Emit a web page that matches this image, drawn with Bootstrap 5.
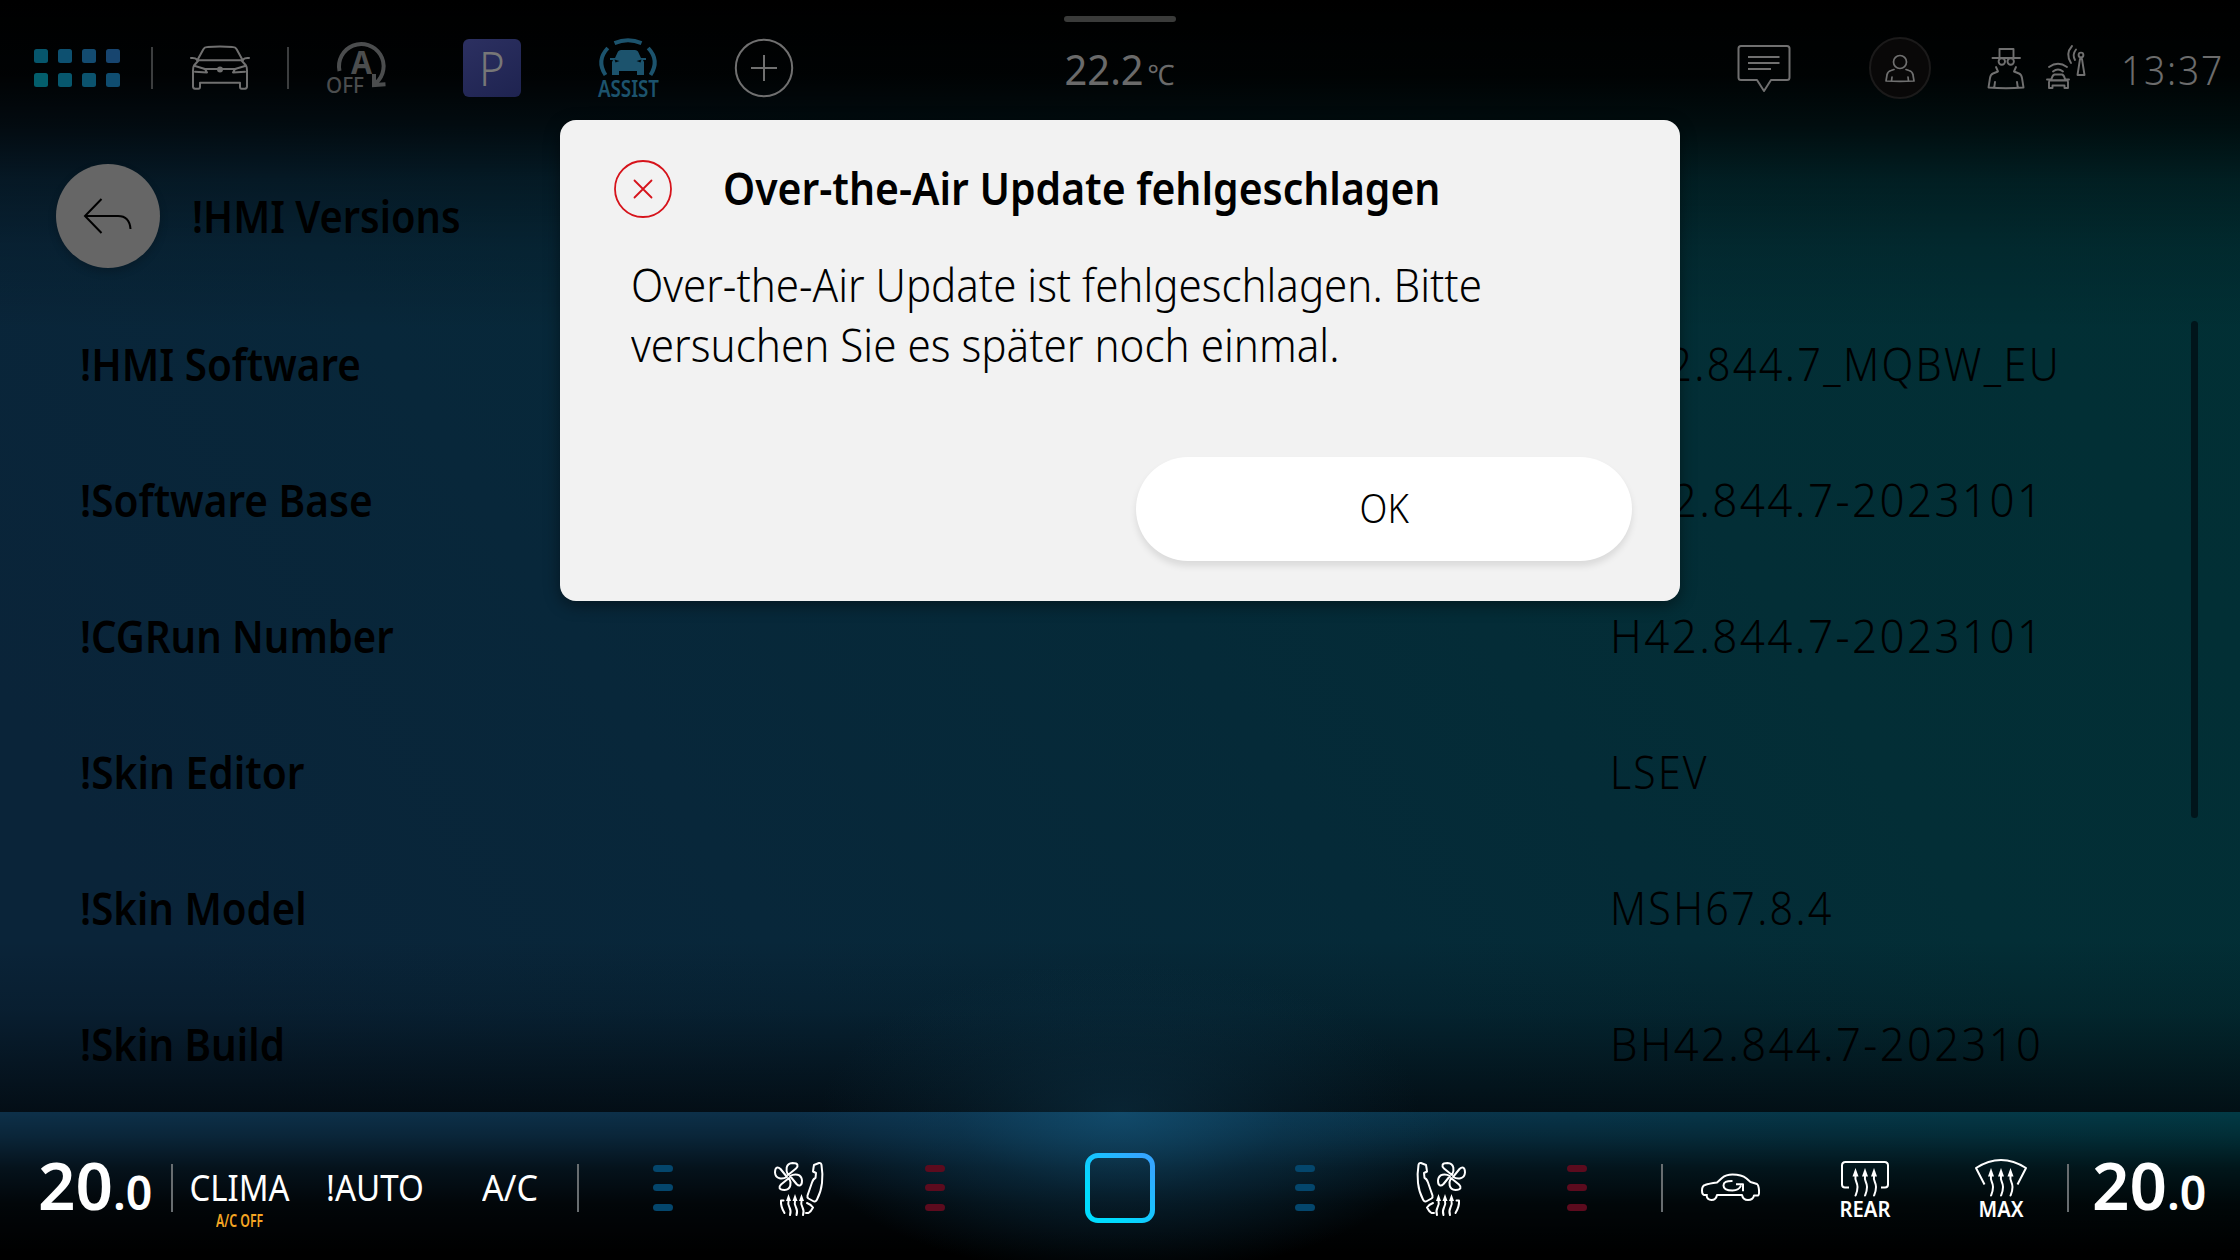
<!DOCTYPE html>
<html lang="de" data-bs-theme="dark">
<head>
<meta charset="utf-8">
<meta name="viewport" content="width=device-width, initial-scale=1">
<title>!HMI Versions</title>
<link href="https://cdn.jsdelivr.net/npm/bootstrap@5.3.0/dist/css/bootstrap.min.css" rel="stylesheet">
<style>
  body { font-family: "Noto Sans", "Open Sans", sans-serif; background: #000; overflow: hidden; }
  .hmi { width: 2240px; height: 1260px; color: #000;
    background:
      radial-gradient(ellipse 300px 150px at 1120px 1112px, rgba(14,56,78,.5), rgba(14,56,78,.2) 55%, transparent),
      linear-gradient(180deg, #000 0, rgba(0,0,0,.94) 75px, rgba(0,0,0,.72) 125px, rgba(0,0,0,.36) 180px, rgba(0,0,0,.14) 245px, transparent 330px),
      linear-gradient(0deg, rgba(2,8,13,.8) 148px, rgba(2,8,13,.52) 195px, rgba(2,8,13,.2) 250px, transparent 320px),
      linear-gradient(57deg, #0a2439 12%, #08273a 32%, #052a38 52%, #032e36 72%, #013034 100%); }
  .fit { display: inline-block; white-space: nowrap; }
  .origin-start { transform-origin: 0 50%; }

  .status-bar { height: 136px; }
  .slot { width: 136px; flex: none; position: relative; }
  .slot-home { width: 152px; padding-left: 2px; }
  .slot-center { width: 576px; }
  .rule-start::before { content: ""; position: absolute; left: -1px; top: 50%; width: 2px; height: 42px; transform: translateY(-50%); background: #3c3e3f; }
  .pull-handle { position: absolute; left: 50%; top: 16px; width: 112px; height: 6px; margin-left: -56px; border-radius: 3px; background: #3a3b3a; }
  .app-grid { display: grid; grid-template-columns: repeat(4, 14px); gap: 10px; }
  .app-grid i { height: 14px; border-radius: 2.5px; }
  .park-tile { width: 58px; height: 58px; border-radius: 6px; background: linear-gradient(150deg, #2c3061, #1e2350); color: #777; font-size: 47px; font-weight: 300; line-height: 58px; }
  .outside { font-size: 41px; color: #6a6a6a; }
  .outside small { font-size: 28px; }
  .clock { font-size: 40px; font-weight: 300; color: #6c6c6c; letter-spacing: 2px; }

  .page-head { height: 160px; padding-left: 56px; }
  .back-btn { width: 104px; height: 104px; background: #666; box-shadow: 0 4px 8px rgba(0,0,0,.2); }
  .page-title, .entry-name { font-size: 45px; font-weight: 560; line-height: 60px; color: #000; }
  .page-title { margin-left: 32px; }
  .entries { --bs-list-group-bg: transparent; --bs-list-group-color: #000; height: 816px; }
  .entry { height: 136px; padding: 0 0 0 80px; --bs-list-group-border-width: 0; }
  .entry-name { width: 1531px; }
  .entry-value { font-size: 45px; font-weight: 300; line-height: 60px; letter-spacing: 2.5px; margin-left: -1px; }
  .scroll-thumb { position: absolute; right: 42px; top: 25px; width: 7px; height: 497px; border-radius: 4px; background: #01151b; }

  .popup { position: absolute; left: 560px; top: 120px; width: 1120px; height: 481px; border-radius: 16px; background: #f2f2f2; color: #000; box-shadow: 0 4px 16px rgba(0,0,0,.45); }
  .popup-head { padding: 39px 0 0 53px; gap: 50px; height: 98px; }
  .popup-title { font-size: 45px; font-weight: 600; line-height: 60px; color: #000; margin-top: -1px; }
  .popup-text { padding: 37px 0 0 71px; font-size: 45px; font-weight: 300; line-height: 60px; }
  .popup-actions { padding: 0 48px 40px 0; }
  .ok-btn { width: 496px; height: 104px; background: #fff; color: #000; font-size: 40px; font-weight: 300; border: 0; padding-bottom: 9px; box-shadow: 0 5px 7px rgba(0,0,0,.1); }

  .climate { height: 148px; margin-top: auto; color: #fff; padding-top: 4px;
    background:
      radial-gradient(ellipse 330px 165px at 1120px 0, rgba(20,84,120,.72), rgba(16,70,102,.36) 50%, transparent),
      linear-gradient(180deg, transparent 0, rgba(0,0,0,.22) 24px, rgba(0,0,0,.62) 56px, rgba(0,0,0,.88) 92px, #000 140px),
      linear-gradient(90deg, #0d3049, #0c3049 40%, #08354a 70%, #023a45); }
  .climate .rule-start::before { height: 48px; background: #686d70; }
  .w-temp { width: 172px; }
  .clima-label { font-size: 36.5px; font-weight: 400; line-height: 50px; margin-top: -2px; margin-right: 2px; }
  .clima-note { position: absolute; left: 0; right: 0; top: 95px; font-size: 17px; font-weight: 600; line-height: 20px; color: #f5a623; }
  .temp { line-height: 80px; padding-top: 13px; }
  .temp b { font-size: 65px; font-weight: 600; }
  .temp span span { font-size: 46px; font-weight: 600; }
  .pills { display: grid; gap: 12.5px; margin-top: -1px; }
  .pills i { width: 20px; height: 7px; border-radius: 3.5px; }
  .cool i { background: #04466c; }
  .heat i { background: #5c0b1e; }
  svg { display: block; overflow: visible; }
  .ln { fill: none; stroke: currentColor; stroke-width: 2; stroke-linecap: round; stroke-linejoin: round; }
  svg text { font-family: "Noto Sans", sans-serif; stroke: none; fill: currentColor; }
  .dim { color: #707070; }
</style>
</head>
<body>
<svg width="0" height="0" class="position-absolute">
  <defs>
    <path id="blade" d="M-.5-1.5C-3-6-3-13 4-13.5C10-13.5 10-10.500 7.500-8Z"/>
    <g id="heatwave"><path class="ln" d="M0 6c-1 5 2 6 2 11c0 4-1 6-2 8.500"/><path d="M0-2L3 6.500H-3Z" fill="currentColor"/></g>
    <g id="seat" class="ln">
      <g transform="translate(788.500 1176.500)"><use href="#blade"/><use href="#blade" transform="rotate(90)"/><use href="#blade" transform="rotate(180)"/><use href="#blade" transform="rotate(270)"/></g>
      <path d="M814 1165l5-2q2-.5 2.500 2q1.500 9 .5 18q-1 9-5 16.500q-1.500 3-4 1.500l-4.500-2.500q-1.500-1-1-3l4.500-13q1.500-4 3.500-4.500l.5-5l-3-1.500q.5-4 1-6.500Z"/>
      <path d="M783.500 1200.500h-2.500q-.5 6 3.500 12.500M807 1203q4 1.500 6 4.500q-2 4-4.500 5.500h-2.500"/>
      <path d="M788.500 1201q-1 3 1 6.500q2 4 .5 7.500M795 1201q-1 3 1 6.500q2 4 .5 7.500M801.500 1201q-1 3 1 6.500q2 4 .5 7.500"/>
      <path fill="currentColor" stroke="none" d="M788.500 1194l2.500 7h-5ZM795 1194l2.500 7h-5ZM801.500 1194l2.500 7h-5Z"/>
    </g>
  </defs>
</svg>

<div class="hmi d-flex flex-column position-relative">
  <header class="status-bar d-flex align-items-center position-relative">
    <div class="pull-handle"></div>
    <div class="slot slot-home d-flex justify-content-center">
      <div class="app-grid">
        <i style="background:#06566c"></i><i style="background:#0d5070"></i><i style="background:#134b70"></i><i style="background:#17456f"></i>
        <i style="background:#035e6c"></i><i style="background:#07576d"></i><i style="background:#0b536e"></i><i style="background:#0f4d70"></i>
      </div>
    </div>
    <div class="slot rule-start d-flex justify-content-center dim">
      <svg width="60" height="60" viewBox="190 38 60 60"><g class="ln">
        <path d="M198 59l5.500-10q1-2 4-2q12.500-1 25 0q3 0 4 2l5.500 10M191 58q4-.5 6 1.500M249 58q-4-.5-6 1.500M197 60.200h46"/>
        <path d="M198 61l-4 4.500q-1 1.500-1 5v16q0 2 2 2.200h3.500q1.500 0 1.500-2v-3.900h40v3.900q0 2 1.500 2h3.500q2-.2 2-2.200v-16q0-3.500-1-5l-4-4.500M204 69h32M195 66l10 3l2 3.500l-12-.7M245 66l-10 3l-2 3.500l12-.7"/></g>
        <circle cx="220" cy="69.500" r="3" fill="currentColor"/></svg>
    </div>
    <div class="slot rule-start d-flex justify-content-center" style="color:#4b4d4e">
      <svg width="60" height="60" viewBox="326 38 60 60">
        <path class="ln" style="stroke-width:4;stroke-linecap:butt;stroke-linejoin:miter" d="M339.500 71A22.300 22.300 0 1 1 376 83M374 74v11l11.500-.7"/>
        <text x="351" y="74" font-size="32" font-weight="700" textLength="21" lengthAdjust="spacingAndGlyphs">A</text>
        <text x="326" y="93" font-size="21" font-weight="500" textLength="38" lengthAdjust="spacingAndGlyphs">OFF</text></svg>
    </div>
    <div class="slot d-flex justify-content-center"><div class="park-tile text-center"><span class="fit" data-fit="26">P</span></div></div>
    <div class="slot d-flex justify-content-center" style="color:#1c536d">
      <svg width="62" height="60" viewBox="597 38 62 60">
        <path class="ln" style="stroke-width:4;stroke-linecap:butt" d="M614.500 43.200Q628 37.500 641.500 43.200M607.800 48Q596 60.500 605.500 75M648.200 48Q660 60.500 650.500 75"/>
        <path fill="currentColor" d="M610 58h5l3-6.500q1-1.500 3-1.500h14q2 0 3 1.500l3 6.500h5v2h-3l1 2v13h-7v-4h-18v4h-7v-13l1-2h-3Z"/>
        <path fill="#000a0e" d="M614.500 59.500l5 1.500l-4 1.500ZM641.500 59.500l-5 1.500l4 1.500Z"/>
        <text x="598" y="97" font-size="23" font-weight="650" textLength="61" lengthAdjust="spacingAndGlyphs">ASSIST</text></svg>
    </div>
    <div class="slot d-flex justify-content-center dim">
      <svg width="60" height="60" viewBox="0 0 60 60"><g class="ln" style="stroke-linecap:butt"><circle cx="30" cy="30" r="28.200"/><path d="M30 17v26M17 30h26"/></g></svg>
    </div>
    <div class="slot slot-center outside d-flex justify-content-center pt-1">
      <span class="fit" data-fit="110">22.2<small class="ms-1">℃</small></span>
    </div>
    <div class="slot ms-auto d-flex justify-content-center dim">
      <svg width="54" height="60" viewBox="1737 38 54 60"><path class="ln" d="M1741 46h46q2.500 0 2.500 2.500v29q0 2.500-2.500 2.500h-16l-7 11l-7-11h-16q-2.500 0-2.500-2.500v-29q0-2.500 2.500-2.500ZM1748 57h31.500M1748 63h31.500M1748 69h23" style="stroke-linecap:butt"/></svg>
    </div>
    <div class="slot d-flex justify-content-center dim">
      <svg width="62" height="62" viewBox="1869 37 62 62"><circle cx="1900" cy="68" r="30" fill="#090808" stroke="#1b1a1a" stroke-width="2"/>
        <path class="ln" style="stroke-width:1.700" d="M1906.500 62a6.500 6.500 0 1 1-13 0a6.500 6.500 0 1 1 13 0ZM1894 69.500l-3 1q-3.500 1-4 4.500l-1 6q14 .7 28 0l-1-6q-.5-3.500-4-4.500l-3-1M1892 77l-.5 4M1908 77l.5 4"/></svg>
    </div>
    <div class="d-flex align-items-center dim" style="width:272px;padding-left:19px">
      <svg width="100" height="60" viewBox="1987 38 100 60"><g class="ln" style="stroke-width:1.900">
        <path d="M1999.500 58v-9h14v9M1992.500 58h27.500"/><circle cx="2001.800" cy="61.500" r="3.200"/><circle cx="2010.700" cy="61.500" r="3.200"/>
        <path d="M1996 67l2 4.500l-5 2q-2.500 1-3 4.500l-1.500 9.500q17.500 1.500 35 0l-1.500-9.500q-.5-3.500-3-4.500l-5-2l2-4.500M1995 82l-.7 5M2017 82l.7 5"/>
        <path d="M2051.500 79q1-4 3-4.500h7.500q2 .5 3 4.500M2047 79.500h3.500M2066 79.500h3M2050 80.500h17M2049 82v6h3.500v-2.500h12v2.500h3.500v-6q0-1.500-1.500-1.800h-16q-1.500.3-1.500 1.800ZM2049 67q9-6.500 18 0M2053 71.500q5-4 10 0"/>
        <circle cx="2081" cy="55" r="2.400"/><path d="M2080 59l-2.500 16h7l-2.500-16ZM2072 46q-7 8-1 17M2076 49.500q-4 5-1 10.500"/></g></svg>
      <span class="fit clock origin-start mt-1" data-fit="103" style="margin-left:34px">13:37</span>
    </div>
  </header>

  <main class="position-relative">
    <div class="page-head d-flex align-items-center">
      <div class="back-btn rounded-circle d-flex align-items-center justify-content-center text-black">
        <svg width="50" height="40" viewBox="83 196 50 40"><path class="ln" style="stroke-linecap:butt;stroke-linejoin:miter" d="M101.500 199L85 216l16.500 17M85 216h33q11.500 0 12.500 13"/></svg>
      </div>
      <h1 class="page-title mb-0"><span class="fit origin-start" data-fit="269">!HMI Versions</span></h1>
    </div>
    <div class="list-group list-group-flush entries position-relative">
      <div class="list-group-item entry d-flex align-items-center"><div class="entry-name"><span class="fit origin-start" data-fit="281">!HMI Software</span></div><div class="entry-value"><span class="fit origin-start" data-fit="451">H42.844.7_MQBW_EU</span></div></div>
      <div class="list-group-item entry d-flex align-items-center"><div class="entry-name"><span class="fit origin-start" data-fit="293">!Software Base</span></div><div class="entry-value"><span class="fit origin-start" data-fit="435">H42.844.7-2023101</span></div></div>
      <div class="list-group-item entry d-flex align-items-center"><div class="entry-name"><span class="fit origin-start" data-fit="314">!CGRun Number</span></div><div class="entry-value"><span class="fit origin-start" data-fit="435">H42.844.7-2023101</span></div></div>
      <div class="list-group-item entry d-flex align-items-center"><div class="entry-name"><span class="fit origin-start" data-fit="224">!Skin Editor</span></div><div class="entry-value"><span class="fit origin-start" data-fit="99">LSEV</span></div></div>
      <div class="list-group-item entry d-flex align-items-center"><div class="entry-name"><span class="fit origin-start" data-fit="227">!Skin Model</span></div><div class="entry-value"><span class="fit origin-start" data-fit="224">MSH67.8.4</span></div></div>
      <div class="list-group-item entry d-flex align-items-center"><div class="entry-name"><span class="fit origin-start" data-fit="205">!Skin Build</span></div><div class="entry-value"><span class="fit origin-start" data-fit="433">BH42.844.7-202310</span></div></div>
      <div class="scroll-thumb"></div>
    </div>
  </main>

  <footer class="climate d-flex">
    <div class="w-temp slot d-flex align-items-center temp" style="padding-left:38px"><span class="fit origin-start" data-fit="114"><b>20</b><span>.0</span></span></div>
    <div class="slot rule-start d-flex align-items-center justify-content-center"><span class="fit clima-label" data-fit="100">CLIMA</span><div class="clima-note text-center"><span class="fit" data-fit="47">A/C OFF</span></div></div>
    <div class="slot d-flex align-items-center justify-content-center"><span class="fit clima-label" data-fit="98">!AUTO</span></div>
    <div class="slot d-flex align-items-center justify-content-center" style="width:134px"><span class="fit clima-label" data-fit="56">A/C</span></div>
    <div class="slot rule-start" style="width:17px"></div>
    <div class="slot d-flex align-items-center justify-content-center"><div class="pills cool"><i></i><i></i><i></i></div></div>
    <div class="slot d-flex align-items-center justify-content-center"><svg width="50" height="56" viewBox="774 1160 50 56"><use href="#seat"/></svg></div>
    <div class="slot d-flex align-items-center justify-content-center"><div class="pills heat"><i></i><i></i><i></i></div></div>
    <div class="slot d-flex align-items-center justify-content-center" style="width:234px">
      <svg width="70" height="70" viewBox="0 0 70 70"><defs><linearGradient id="ring" x1="0" y1="1" x2="1" y2="0"><stop offset=".25" stop-color="#00dcff"/><stop offset=".9" stop-color="#34a6ff"/></linearGradient></defs><rect x="2.500" y="2.500" width="65" height="65" rx="10.500" fill="none" stroke="url(#ring)" stroke-width="5"/></svg>
    </div>
    <div class="slot d-flex align-items-center justify-content-center"><div class="pills cool"><i></i><i></i><i></i></div></div>
    <div class="slot d-flex align-items-center justify-content-center"><svg width="50" height="56" viewBox="774 1160 50 56"><use href="#seat" transform="translate(1598 0) scale(-1 1)"/></svg></div>
    <div class="slot d-flex align-items-center justify-content-center"><div class="pills heat"><i></i><i></i><i></i></div></div>
    <div class="slot" style="width:17px"></div>
    <div class="slot rule-start d-flex align-items-center justify-content-center" style="width:135px">
      <svg width="60" height="60" viewBox="1699 1158 60 60"><g class="ln">
        <path d="M1706 1195h-3q-2-.5-2-4.500q0-4.500 3-5.500q4-1.500 12-2.500l5-4.500q4-3.500 10.500-3.500q9 0 14 4l4 3.500l6.500 2q1.500 1 2 6q.3 5-1 5.500h-4q-1 4.500-6 4.500q-5 0-6-5h-25q-1 5-5.500 5t-5-5Z"/>
        <path style="stroke-linecap:butt" d="M1731.500 1181q-9-.3-9 4.500q0 5 9 5q6.500 0 8.500-5M1735 1184.300h7v7"/></g></svg>
    </div>
    <div class="slot d-flex align-items-center justify-content-center">
      <svg width="52" height="60" viewBox="1839 1158 52 60"><path class="ln" style="stroke-linecap:butt" d="M1849 1187.500h-4q-3 0-3-3v-19q0-3.500 3.500-3.500h39q3.500 0 3.500 3.500v19q0 3-3 3h-4"/>
        <use href="#heatwave" x="1855.500" y="1170"/><use href="#heatwave" x="1865" y="1170"/><use href="#heatwave" x="1874" y="1170"/>
        <text x="1839.500" y="1217" font-size="22" font-weight="650" textLength="51" lengthAdjust="spacingAndGlyphs">REAR</text></svg>
    </div>
    <div class="slot d-flex align-items-center justify-content-center" style="width:135px">
      <svg width="54" height="60" viewBox="1974 1158 54 60"><path class="ln" style="stroke-linecap:butt" d="M1984.500 1184.500l-8.500-16.500q25-16 50 0l-8.500 16.500"/>
        <use href="#heatwave" x="1991" y="1170"/><use href="#heatwave" x="2001" y="1170"/><use href="#heatwave" x="2010.500" y="1170"/>
        <text x="1978.500" y="1217" font-size="22" font-weight="650" textLength="45" lengthAdjust="spacingAndGlyphs">MAX</text></svg>
    </div>
    <div class="w-temp slot rule-start d-flex align-items-center temp" style="padding-left:24px"><span class="fit origin-start" data-fit="114"><b>20</b><span>.0</span></span></div>
  </footer>

  <section class="popup d-flex flex-column" role="dialog">
    <div class="popup-head d-flex">
      <svg width="60" height="60" viewBox="0 0 60 60" color="#d6131b"><g class="ln" style="stroke-width:1.800"><circle cx="30" cy="30" r="28"/><path d="M21.500 21.500l17 17M38.500 21.500l-17 17"/></g></svg>
      <h2 class="popup-title mb-0"><span class="fit origin-start" data-fit="717">Over-the-Air Update fehlgeschlagen</span></h2>
    </div>
    <div class="popup-text"><span class="fit origin-start" data-fit="851">Over-the-Air Update ist fehlgeschlagen. Bitte</span><br><span class="fit origin-start" data-fit="708">versuchen Sie es später noch einmal.</span></div>
    <div class="popup-actions mt-auto d-flex justify-content-end"><button class="btn rounded-pill ok-btn"><span class="fit" data-fit="49">OK</span></button></div>
  </section>
</div>
<script src="https://cdn.jsdelivr.net/npm/bootstrap@5.3.0/dist/js/bootstrap.bundle.min.js"></script>
<script>
  document.querySelectorAll('[data-fit]').forEach(function (el) {
    el.style.transform = 'scaleX(' + (el.dataset.fit / el.offsetWidth) + ')';
  });
</script>
</body>
</html>
